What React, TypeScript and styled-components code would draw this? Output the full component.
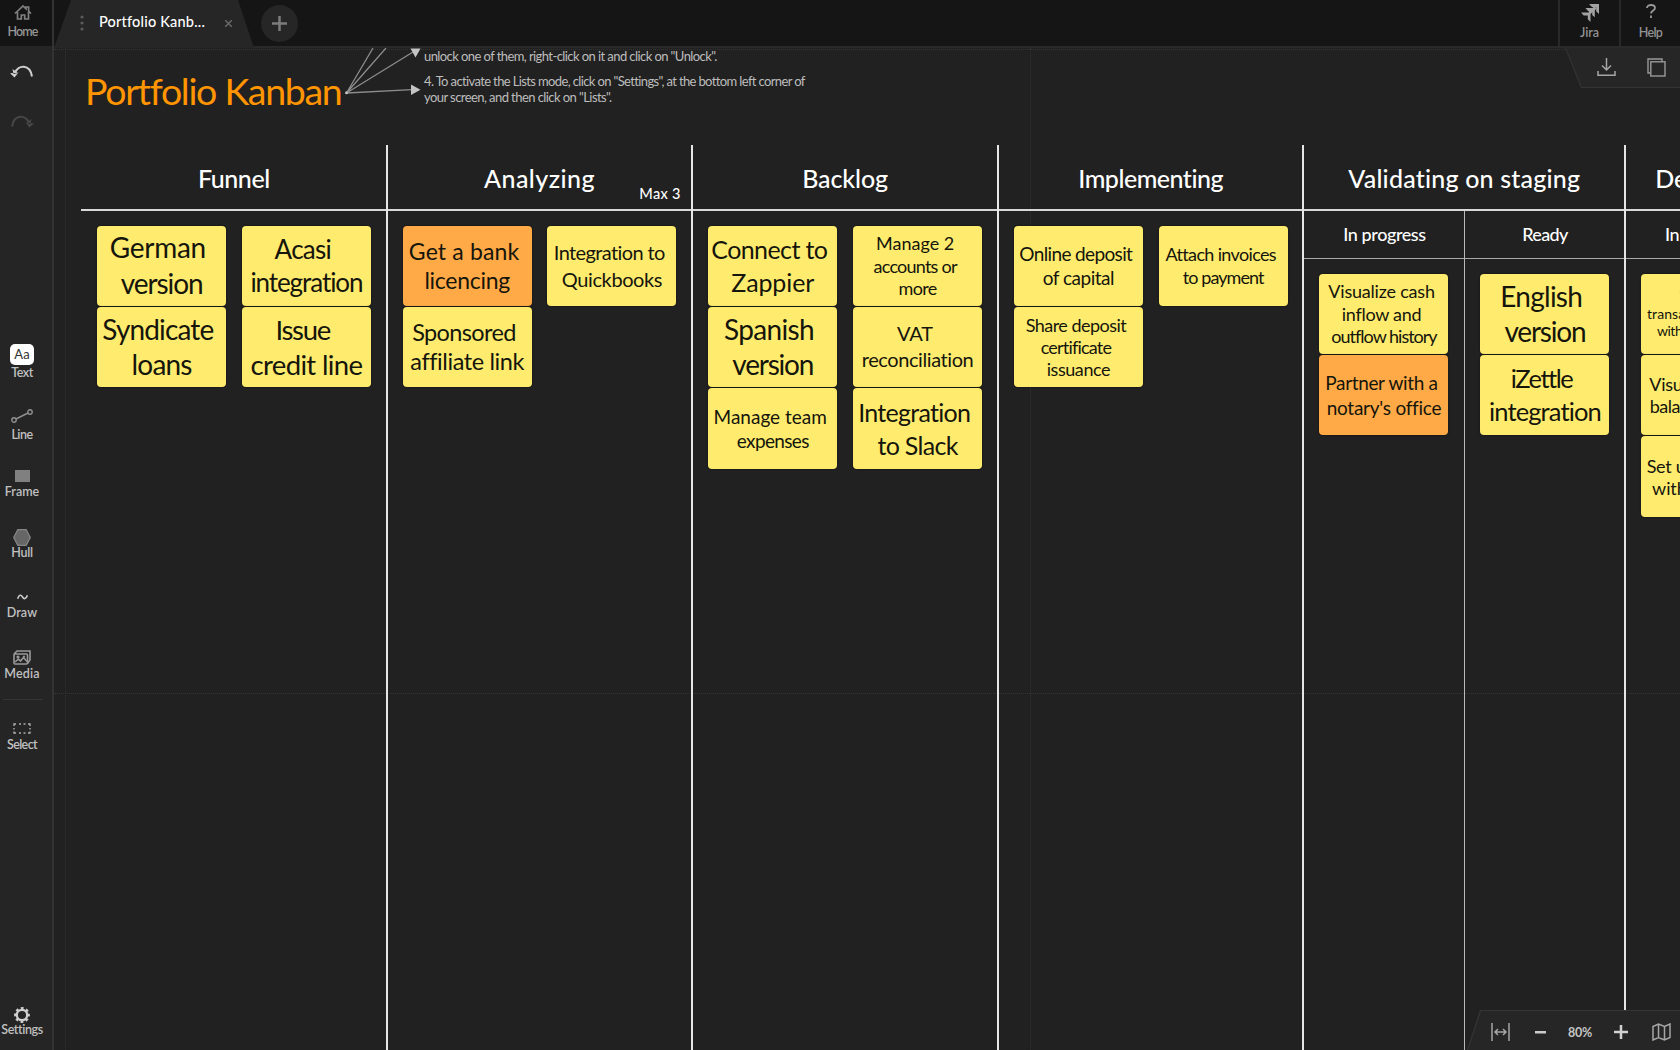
import React from 'react';
import styled, { createGlobalStyle } from 'styled-components';

const GlobalStyle = createGlobalStyle`
  * { box-sizing: border-box; }
  html, body { margin: 0; height: 100%; background: #212121; overflow: hidden; }
  body { font-family: Lato, 'Open Sans', sans-serif; color: #fff; }
  svg { display: block; flex: none; }
`;

const Shell = styled.div`
  display: grid;
  grid-template-columns: 54px 1fr;
  grid-template-rows: 48px 1fr;
  width: 1680px;
  height: 1050px;
  overflow: hidden;
`;

const Label = styled.span<{ $ls?: number; $color?: string }>`
  font-size: 12.5px;
  line-height: 14px;
  font-weight: 600;
  white-space: nowrap;
  letter-spacing: ${p => p.$ls ?? 0}px;
  color: ${p => p.$color ?? '#c0c0c0'};
`;

const HomeCell = styled.div`
  display: flex;
  flex-direction: column;
  align-items: center;
  gap: 5px;
  width: 52px;
  height: 46px;
  padding: 5px 7px 0 0;
  background: #141414;
`;

const HomeWrap = styled.div`
  background: #252525;
  border-right: 2px solid #333;
`;

const TopBar = styled.header`
  display: flex;
  height: 48px;
  background: #151515;
  border-bottom: 2px solid #292929;
`;

const Tab = styled.div`
  display: flex;
  align-items: center;
  width: 200px;
  height: 48px;
  padding: 0 22px 2px 26px;
  background: #262626;
  clip-path: polygon(0 100%, 17px 0, 184px 0, 100% 100%);
`;

const TabTitle = styled.span`
  flex: 1;
  margin: -2px 0 0 15px;
  font-size: 14.5px;
  font-weight: 500;
  line-height: 18px;
  letter-spacing: 0.2px;
  white-space: nowrap;
`;

const AddTab = styled.div`
  display: flex;
  align-items: center;
  justify-content: center;
  width: 37px;
  height: 37px;
  margin: 5px 0 0 7px;
  border-radius: 50%;
  background: #262626;
`;

const TopActions = styled.div`
  display: flex;
  margin-left: auto;
`;

const TopAction = styled.div`
  display: flex;
  flex-direction: column;
  align-items: center;
  justify-content: space-between;
  width: 61px;
  height: 46px;
  padding: 4px 0 6px;
  border-left: 2px solid #292929;
`;

const Sidebar = styled.nav`
  display: flex;
  flex-direction: column;
  height: 1002px;
  padding: 17px 8px 13px 0;
  background: #252525;
  border-right: 2px solid #333;
`;

const History = styled.div`
  display: flex;
  flex-direction: column;
  align-items: center;
  gap: 36px;
  height: 256px;
`;

const Tool = styled.div<{ $h: number; $gap: number }>`
  display: flex;
  flex-direction: column;
  align-items: center;
  justify-content: flex-end;
  gap: ${p => p.$gap}px;
  height: ${p => p.$h}px;
`;

const Rule = styled.div`
  width: 40px;
  height: 1px;
  margin: 18px 0 0 3px;
  background: #343434;
`;

const TextBadge = styled.div`
  width: 24px;
  height: 21px;
  border-radius: 5px;
  background: #fff;
  color: #333;
  font-size: 13px;
  line-height: 20px;
  text-align: center;
`;

const Spacer = styled.div`
  flex: 1;
`;

const Canvas = styled.main`
  position: relative;
  height: 1002px;
  overflow: hidden;
  background: #212121;
`;

const Guide = styled.div<{ $x?: number; $y?: number }>`
  position: absolute;
  left: ${p => p.$x ?? 0}px;
  top: ${p => p.$y ?? 0}px;
  ${p => (p.$x !== undefined
    ? 'height: 100%; border-left: 1px dotted #303030;'
    : 'width: 100%; border-top: 1px dotted #343434;')}
`;

const Intro = styled.div`
  position: relative;
  display: flex;
  align-items: flex-start;
  height: 97px;
`;

const BoardTitle = styled.h1`
  width: 286px;
  margin: 0;
  padding: 20px 0 0 31px;
  font-size: 37.5px;
  font-weight: 400;
  line-height: 46px;
  letter-spacing: -1.3px;
  white-space: nowrap;
  color: #ff9500;
`;

const Notes = styled.div`
  display: flex;
  flex-direction: column;
  gap: 8.8px;
  margin-top: -0.5px;
`;

const NoteText = styled.p`
  margin: 0;
  font-size: 13px;
  line-height: 16.2px;
  white-space: nowrap;
  color: #bdbdbd;
`;

const Tracked = styled.span<{ $ls: number }>`
  display: block;
  letter-spacing: ${p => p.$ls}px;
`;

const Board = styled.div`
  position: relative;
  display: flex;
  height: 905px;
  margin-left: 26.1px;
`;

const Column = styled.section<{ $w: number; $first?: boolean }>`
  flex: none;
  display: flex;
  flex-direction: column;
  width: ${p => p.$w}px;
  border-left: 2px solid ${p => (p.$first ? 'transparent' : '#e6e6e6')};
`;

const ColumnHead = styled.div<{ $first?: boolean }>`
  position: relative;
  display: flex;
  align-items: center;
  justify-content: center;
  height: 66px;
  padding-top: 1px;
  margin-left: ${p => (p.$first ? -1 : 0)}px;
  padding-left: ${p => (p.$first ? 1 : 0)}px;
  border-bottom: 2px solid #d8d8d8;
`;

const ColumnTitle = styled.h2<{ $ls: number }>`
  margin: 0;
  font-size: 25px;
  font-weight: 500;
  line-height: 30px;
  white-space: nowrap;
  letter-spacing: ${p => p.$ls}px;
`;

const Limit = styled.span`
  position: absolute;
  right: 10.5px;
  bottom: 7px;
  font-size: 14.5px;
  font-weight: 500;
  line-height: 16px;
  letter-spacing: 0.3px;
`;

const Lanes = styled.div`
  display: flex;
  flex: 1;
`;

const Lane = styled.div<{ $divided?: boolean }>`
  width: 160px;
  flex: none;
  border-left: ${p => (p.$divided ? '1px solid #b9b9b9' : '0')};
`;

const LaneHead = styled.div<{ $ls: number }>`
  display: flex;
  align-items: center;
  justify-content: center;
  height: 48px;
  padding-bottom: 2px;
  border-bottom: 1px solid #a9a9a9;
  font-size: 18px;
  font-weight: 500;
  letter-spacing: ${p => p.$ls}px;
`;

const Stacks = styled.div`
  display: flex;
  gap: 15.8px;
  padding: 14.6px 0 0 15px;
`;

const Stack = styled.div`
  display: flex;
  flex-direction: column;
  gap: 1px;
`;

const Card = styled.div<{ $size: number; $lh: number; $orange?: boolean }>`
  display: flex;
  flex-direction: column;
  align-items: center;
  justify-content: center;
  width: 129px;
  height: 80.4px;
  border-radius: 4px;
  background: ${p => (p.$orange ? '#ffaa46' : '#ffec6e')};
  box-shadow: 0 0 2px rgba(0, 0, 0, 0.6);
  color: #15150c;
  font-size: ${p => p.$size}px;
  line-height: ${p => p.$lh}px;
`;

const Line = styled.span<{ $ls: number }>`
  white-space: nowrap;
  letter-spacing: ${p => p.$ls}px;
  &:not(:last-child) { padding-right: 0.27em; }
`;

const DownloadDock = styled.div`
  position: absolute;
  top: 0;
  right: 0;
  width: 115px;
  height: 40px;
  background: #343434;
  clip-path: polygon(0 0, 100% 0, 100% 100%, 16px 100%);
`;

const DownloadInner = styled.div`
  display: flex;
  gap: 31px;
  height: 39px;
  padding: 10px 0 0 32px;
  background: #262626;
  clip-path: polygon(1px 0, 100% 0, 100% 100%, 17px 100%);
`;

const ZoomDock = styled.div`
  position: absolute;
  right: 0;
  bottom: 0;
  width: 213px;
  height: 40px;
  padding-top: 1px;
  background: #363636;
  clip-path: polygon(0 100%, 13px 0, 100% 0, 100% 100%);
`;

const ZoomInner = styled.div`
  display: flex;
  align-items: center;
  height: 39px;
  padding: 3px 0 0 24px;
  background: #262626;
  clip-path: polygon(1px 100%, 14px 0, 100% 0, 100% 100%);
`;

const ZoomStep = styled.div<{ $ml: number }>`
  margin-left: ${p => p.$ml}px;
`;

const Percent = styled.span`
  width: 25px;
  margin-left: 22px;
  font-size: 12.5px;
  font-weight: 700;
  letter-spacing: -0.3px;
  color: #c4c4c4;
`;

type CardData = { size: number; lh: number; orange?: boolean; lines: [string, number][] };

const c = (size: number, lh: number, lines: [string, number][], orange?: boolean): CardData => ({ size, lh, lines, orange });

type ColumnData = { title: string; ls: number; limit?: string; stacks: CardData[][] };

const columns: ColumnData[] = [
  {
    title: 'Funnel', ls: -0.45,
    stacks: [
      [c(28, 35.4, [['German', -0.3], ['version', -1.06]]), c(28, 35, [['Syndicate', -0.87], ['loans', -0.83]])],
      [c(26, 32.7, [['Acasi', -0.71], ['integration', -1.08]]), c(27.5, 35, [['Issue', -1.3], ['credit line', -0.65]])],
    ],
  },
  {
    title: 'Analyzing', ls: 0.45, limit: 'Max 3',
    stacks: [
      [c(23, 29, [['Get a bank', 0.15], ['licencing', -0.29]], true), c(23.5, 29.3, [['Sponsored', -0.63], ['affiliate link', -0.4]])],
      [c(20, 26.5, [['Integration to', -0.62], ['Quickbooks', -0.4]])],
    ],
  },
  {
    title: 'Backlog', ls: -0.1,
    stacks: [
      [
        c(25, 33, [['Connect to', -0.6], ['Zappier', -0.1]]),
        c(28, 34.7, [['Spanish', -0.66], ['version', -1.2]]),
        c(19, 23.7, [['Manage team', 0], ['expenses', -0.66]]),
      ],
      [
        c(18, 22.5, [['Manage 2', 0], ['accounts or', -0.77], ['more', -0.63]]),
        c(20, 25.7, [['VAT', -0.2], ['reconciliation', -0.42]]),
        c(25, 32.7, [['Integration', -0.73], ['to Slack', -0.7]]),
      ],
    ],
  },
  {
    title: 'Implementing', ls: -0.5,
    stacks: [
      [
        c(19, 24, [['Online deposit', -0.64], ['of capital', -0.49]]),
        c(18, 22.2, [['Share deposit', -0.52], ['certificate', -0.8], ['issuance', -0.44]]),
      ],
      [c(18, 22.5, [['Attach invoices', -0.65], ['to payment', -0.92]])],
    ],
  },
];

type LaneData = { title: string; ls: number; cards: CardData[] };

const splitColumns: { title: string; ls: number; lanes: LaneData[] }[] = [
  {
    title: 'Validating on staging', ls: 0.2,
    lanes: [
      {
        title: 'In progress', ls: -0.42,
        cards: [
          c(18, 22.5, [['Visualize cash', -0.2], ['inflow and', -0.29], ['outflow history', -1]]),
          c(19, 25, [['Partner with a', -0.35], ["notary's office", -0.25]], true),
        ],
      },
      {
        title: 'Ready', ls: -0.65,
        cards: [
          c(28, 35, [['English', -0.74], ['version', -1.2]]),
          c(25.5, 32.7, [['iZettle', -1.5], ['integration', -0.88]]),
        ],
      },
    ],
  },
  {
    title: 'Deploying to production', ls: -0.3,
    lanes: [
      {
        title: 'In progress', ls: -0.42,
        cards: [
          c(14, 17, [['View all', 0], ['transactions made', 0.1], ['with a credit card', -0.5]]),
          c(18, 22.5, [['Visualize bank', -0.3], ['balance history', -0.5]]),
          c(18, 22, [['Set up account', -0.3], ['with the bank', -0.1]]),
        ],
      },
    ],
  },
];

const CardStack = ({ cards }: { cards: CardData[] }) => (
  <Stack>
    {cards.map((card, i) => (
      <Card key={i} $size={card.size} $lh={card.lh} $orange={card.orange}>
        {card.lines.map(([text, ls]) => <Line key={text} $ls={ls}>{text}</Line>)}
      </Card>
    ))}
  </Stack>
);

const HomeIcon = () => (
  <svg width="18" height="15" viewBox="0 0 18 15" fill="none" stroke="#808080" strokeWidth="1.7">
    <path d="M1 8.500 9 1l3 2.800V2h2.600v4.200L17 8.500M3.500 7v7h3.800v-4h3.400v4h3.800V7" />
  </svg>
);

const UndoIcon = ({ flip }: { flip?: boolean }) => (
  <svg width="24" height="14" viewBox="0 0 24 14" transform={flip ? 'scale(-1 1)' : undefined}>
    <path d="M5 8C8 -.5 20 -1.500 22 11.500" fill="none" stroke={flip ? '#474747' : '#cfcfcf'} strokeWidth="2" />
    <path d="M0 8.200 8.500 7.500 4.500 12.500zM2.500 4l1 5 4.500-1z" fill={flip ? '#474747' : '#cfcfcf'} />
  </svg>
);

const LineIcon = () => (
  <svg width="22" height="14" viewBox="0 0 22 14" fill="none" stroke="#8f8f8f" strokeWidth="1.4">
    <circle cx="3" cy="11" r="2.200" /><circle cx="19" cy="3" r="2.200" /><path d="M5 10 17 4" />
  </svg>
);

const FrameIcon = () => (
  <svg width="15" height="12"><rect width="15" height="12" fill="#808080" /></svg>
);

const HullIcon = () => (
  <svg width="18" height="17" viewBox="0 0 18 17">
    <path d="M4.800.7h8.400L17.300 8.500 13.200 16.300H4.800L.7 8.500z" fill="#666" stroke="#868686" strokeWidth="1.2" />
  </svg>
);

const DrawIcon = () => (
  <svg width="11" height="6" viewBox="0 0 11 6" fill="none" stroke="#ccc" strokeWidth="1.6">
    <path d="M.7 4.800C2 .5 4 .5 5.500 3S9 5.200 10.400 1.200" />
  </svg>
);

const MediaIcon = () => (
  <svg width="18" height="15" viewBox="0 0 18 15" fill="none" stroke="#999" strokeWidth="1.6">
    <path d="M1 4 4 1h13v9l-2.500 3.500" />
    <rect x="1" y="4" width="13.500" height="10" rx="1" />
    <path d="m2 12 3.500-3 2 2 3-3.500 3.500 4" />
    <circle cx="5" cy="7" r=".8" /><path d="M10 6.500h2" />
  </svg>
);

const SelectIcon = () => (
  <svg width="18" height="11" viewBox="0 0 18 11" fill="none" stroke="#aaa" strokeWidth="1.4">
    <path d="M1 3V1h2M6 1h2M10.500 1h2M15 1h2v2M17 5v1.500M17 8.500V10h-2M12.500 10h-2M8 10H6M3 10H1V8.500M1 6.500V5" />
  </svg>
);

const GearIcon = () => (
  <svg width="16" height="16" viewBox="0 0 16 16" fill="none" stroke="#cfcfcf">
    <circle cx="8" cy="8" r="5.200" strokeWidth="2.300" />
    <circle cx="8" cy="8" r="6.800" strokeWidth="2.200" strokeDasharray="2.800 2.540" strokeDashoffset="1.400" />
  </svg>
);

const JiraIcon = () => (
  <svg width="18" height="18" viewBox="0 0 18 18" fill="#a2a2a2">
    <path d="M8 0h10v10l-2.800-2.800V3H11z" />
    <path d="M4.500 4h9.300v9.300L11.200 11V7H7z" />
    <path d="M0 8.500h9.500V18l-2.700-2.700v-3.800H2.700z" />
    <path d="M7.500 7.500 13.500 2l2.300 2.400-7 6z" />
  </svg>
);

const DownloadIcon = () => (
  <svg width="19" height="19" viewBox="0 0 19 19" fill="none" stroke="#a5a5a5" strokeWidth="1.5">
    <path d="M9.500 0v11.500M5 7.500l4.500 4.500L14 7.500M1 13v4.200h17V13" />
  </svg>
);

const CopyIcon = () => (
  <svg width="19" height="19" viewBox="0 0 19 19" fill="none" stroke="#999" strokeWidth="1.4">
    <path d="M3.500 15H1V1h14v2.500" /><rect x="3.800" y="3.800" width="14.200" height="14.200" />
  </svg>
);

const FitIcon = () => (
  <svg width="19" height="18" viewBox="0 0 19 18" fill="none" stroke="#a5a5a5" strokeWidth="1.5">
    <path d="M1 0v18M18 0v18M4 9h11M7 6 4 9l3 3M12 6l3 3-3 3" />
  </svg>
);

const MapIcon = () => (
  <svg width="19" height="18" viewBox="0 0 19 18" fill="none" stroke="#a5a5a5" strokeWidth="1.5">
    <path d="M1 3.500 6.500 1l6 2.500L18 1v13.500L12.500 17l-6-2.500L1 17zM6.500 1v13.500M12.500 3.500V17" />
  </svg>
);

export default function App() {
  return (
    <Shell>
      <GlobalStyle />
      <HomeWrap>
        <HomeCell>
          <HomeIcon />
          <Label $ls={-0.85} $color="#969696">Home</Label>
        </HomeCell>
      </HomeWrap>

      <TopBar>
        <Tab>
          <svg width="4" height="16" viewBox="0 0 4 16" fill="#5a5a5a">
            <circle cx="2" cy="2" r="1.600" /><circle cx="2" cy="8" r="1.600" /><circle cx="2" cy="14" r="1.600" />
          </svg>
          <TabTitle>Portfolio Kanb...</TabTitle>
          <svg width="7" height="7" viewBox="0 0 7 7" stroke="#686868" strokeWidth="1.500"><path d="m0 0 7 7M7 0 0 7" /></svg>
        </Tab>
        <AddTab>
          <svg width="15" height="15" viewBox="0 0 15 15" stroke="#7c7c7c" strokeWidth="2.500"><path d="M7.500 0v15M0 7.500h15" /></svg>
        </AddTab>
        <TopActions>
          <TopAction>
            <JiraIcon />
            <Label $ls={0} $color="#929292">Jira</Label>
          </TopAction>
          <TopAction>
            <svg width="10" height="14" viewBox="0 0 10 14" fill="none" stroke="#989898" strokeWidth="1.800">
              <path d="M1 4C1 0 9 0 9 4c0 2.500-4 2.500-4 5.500M5 11.500V14" />
            </svg>
            <Label $ls={-0.65} $color="#929292">Help</Label>
          </TopAction>
        </TopActions>
      </TopBar>

      <Sidebar>
        <History>
          <UndoIcon />
          <UndoIcon flip />
        </History>
        <Tool $h={59} $gap={1}><TextBadge>Aa</TextBadge><Label $ls={-0.45}>Text</Label></Tool>
        <Tool $h={62} $gap={5}><LineIcon /><Label $ls={-0.5}>Line</Label></Tool>
        <Tool $h={57} $gap={3}><FrameIcon /><Label $ls={0}>Frame</Label></Tool>
        <Tool $h={61} $gap={0}><HullIcon /><Label $ls={-0.2}>Hull</Label></Tool>
        <Tool $h={60} $gap={6}><DrawIcon /><Label $ls={0.1}>Draw</Label></Tool>
        <Tool $h={61} $gap={2}><MediaIcon /><Label $ls={0.2}>Media</Label></Tool>
        <Rule />
        <Tool $h={52} $gap={4}><SelectIcon /><Label $ls={-0.6}>Select</Label></Tool>
        <Spacer />
        <Tool $h={40} $gap={0}><GearIcon /><Label $ls={-0.4}>Settings</Label></Tool>
      </Sidebar>

      <Canvas>
        <Guide $x={11} />
        <Guide $x={976} />
        <Guide $y={1} />
        <Guide $y={645} />
        <Intro>
          <BoardTitle>Portfolio Kanban</BoardTitle>
          <svg width="84" height="97" viewBox="0 0 84 97">
            <path d="M33 0 6.500 45 46 0M6.500 45 73 4M6.500 45 72 41.700" fill="none" stroke="#8c8c8c" strokeWidth="1.300" />
            <path d="M70.500 .5h10l-5 9zM71 36.500l9.500 5.200L71 47z" fill="#c4c4c4" />
            <circle cx="6.500" cy="44.700" r="1.500" fill="#c4c4c4" />
          </svg>
          <Notes>
            <NoteText>
              <Tracked $ls={-0.58}>unlock one of them, right-click on it and click on "Unlock".</Tracked>
            </NoteText>
            <NoteText>
              <Tracked $ls={-0.63}>4. To activate the Lists mode, click on "Settings", at the bottom left corner of</Tracked>
              <Tracked $ls={-0.57}>your screen, and then click on "Lists".</Tracked>
            </NoteText>
          </Notes>
        </Intro>

        <Board>
          {columns.map((col, i) => (
            <Column key={col.title} $w={305.6} $first={i === 0}>
              <ColumnHead $first={i === 0}>
                <ColumnTitle $ls={col.ls}>{col.title}</ColumnTitle>
                {col.limit && <Limit>{col.limit}</Limit>}
              </ColumnHead>
              <Stacks>
                {col.stacks.map((cards, k) => <CardStack key={k} cards={cards} />)}
              </Stacks>
            </Column>
          ))}
          {splitColumns.map(col => (
            <Column key={col.title} $w={321.7}>
              <ColumnHead><ColumnTitle $ls={col.ls}>{col.title}</ColumnTitle></ColumnHead>
              <Lanes>
                {col.lanes.map((lane, k) => (
                  <Lane key={k} $divided={k > 0}>
                    <LaneHead $ls={lane.ls}>{lane.title}</LaneHead>
                    <Stacks><CardStack cards={lane.cards} /></Stacks>
                  </Lane>
                ))}
              </Lanes>
            </Column>
          ))}
        </Board>

        <DownloadDock>
          <DownloadInner>
            <DownloadIcon />
            <CopyIcon />
          </DownloadInner>
        </DownloadDock>
        <ZoomDock>
          <ZoomInner>
            <FitIcon />
            <ZoomStep $ml={25}>
              <svg width="11" height="3" viewBox="0 0 11 3" fill="#ccc"><rect width="11" height="2.500" /></svg>
            </ZoomStep>
            <Percent>80%</Percent>
            <ZoomStep $ml={21}>
              <svg width="14" height="14" viewBox="0 0 14 14" stroke="#d2d2d2" strokeWidth="2.500"><path d="M7 0v14M0 7h14" /></svg>
            </ZoomStep>
            <ZoomStep $ml={24}><MapIcon /></ZoomStep>
          </ZoomInner>
        </ZoomDock>
      </Canvas>
    </Shell>
  );
}
